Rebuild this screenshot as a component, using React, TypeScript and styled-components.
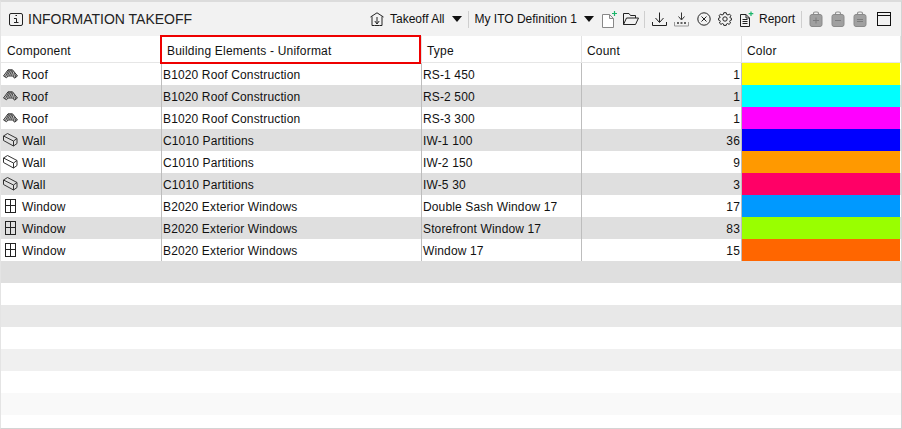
import styled, { createGlobalStyle } from 'styled-components';

const GlobalStyle = createGlobalStyle`
  html, body {
    margin: 0;
    padding: 0;
    background: #fff;
  }
  body {
    font-family: "Liberation Sans", Arial, sans-serif;
    font-size: 12px;
    color: #111;
  }
`;

const Panel = styled.div`
  width: 902px;
  height: 429px;
  box-sizing: border-box;
  border: 1px solid #d4d4d4;
  border-top: 2px solid #dcdcdc;
  border-left-color: #e4e4e4;
  overflow: hidden;
  display: flex;
  flex-direction: column;
`;

const TitleBar = styled.div`
  height: 34px;
  flex: none;
  background: #f2f2f2;
  display: flex;
  align-items: center;
  padding-left: 8px;
  padding-right: 10px;
`;

const Title = styled.div`
  font-size: 14px;
  margin-left: 5px;
  color: #222;
`;

const Toolbar = styled.div`
  margin-left: auto;
  display: flex;
  align-items: center;
  height: 100%;
`;

const ToolText = styled.span<{ $ml?: number }>`
  font-size: 12px;
  color: #111;
  margin-left: ${({ $ml }) => $ml ?? 0}px;
  white-space: nowrap;
`;

const Caret = styled.span<{ $ml?: number }>`
  width: 0;
  height: 0;
  border-left: 5.5px solid transparent;
  border-right: 5.5px solid transparent;
  border-top: 6px solid #111;
  margin-left: ${({ $ml }) => $ml ?? 0}px;
`;

const Sep = styled.span<{ $ml: number; $mr: number }>`
  width: 1px;
  height: 17px;
  background: #cfcfcf;
  margin-left: ${({ $ml }) => $ml}px;
  margin-right: ${({ $mr }) => $mr}px;
`;

const Ico = styled.svg<{ $ml?: number }>`
  flex: none;
  display: block;
  margin-left: ${({ $ml }) => $ml ?? 0}px;
`;

const columns = '161px 260px 160px 160px 159px';

const HeaderRow = styled.div`
  display: grid;
  grid-template-columns: ${columns};
  height: 27px;
  flex: none;
  border-bottom: 1px solid #e6e6e6;
  box-sizing: border-box;
`;

const HeaderCell = styled.div<{ $first?: boolean }>`
  position: relative;
  display: flex;
  align-items: center;
  box-sizing: border-box;
  padding-top: 3px;
  padding-left: ${({ $first }) => ($first ? '6px' : '5px')};
  border-right: 1px solid #e2e2e2;
  color: #111;
  letter-spacing: 0.2px;
`;

const ActiveMark = styled.div`
  position: absolute;
  top: -1px;
  left: -2px;
  right: 0;
  bottom: -2px;
  border: 2px solid #ee0000;
`;

const Row = styled.div<{ $bg: string }>`
  display: grid;
  grid-template-columns: ${columns};
  height: 22px;
  flex: none;
  background: ${({ $bg }) => $bg};
`;

const Cell = styled.div<{ $right?: boolean }>`
  display: flex;
  align-items: center;
  box-sizing: border-box;
  padding-top: 2px;
  padding-left: 1px;
  border-right: 1px solid #bdbdbd;
  white-space: nowrap;
  letter-spacing: 0.14px;
  ${({ $right }) => $right && 'justify-content: flex-end; padding-right: 1px;'}
`;

const NameCell = styled(Cell)`
  padding-top: 0;
  padding-left: 2px;
  gap: 4px;
`;

const NameText = styled.span`
  padding-top: 2px;
`;

const IconSlot = styled.span`
  width: 15px;
  height: 16px;
  display: flex;
  align-items: center;
  justify-content: center;
  flex: none;
`;

const ColorCell = styled.div<{ $color: string }>`
  background: ${({ $color }) => $color};
  margin-right: 1px;
`;

const EmptyRow = styled.div<{ $bg: string }>`
  height: 22px;
  flex: none;
  background: ${({ $bg }) => $bg};
`;

const RoofIcon = () => (
  <svg width="15" height="10" viewBox="0 0 15 10" fill="none" stroke="#3a3a3a" strokeWidth="1">
    <path d="M0.5 7 L5 0.8 H9.5 L14.5 7 L11.5 9.2 L9.8 7 H5 L3.5 8.8 Z" fill="#c4c4c4" />
    <path d="M2.5 7.5 L6 1 M4.5 6.5 L7.5 1 M6.5 6.5 L9 1 M8.5 6.5 L10 2 M10.5 7.5 L11.5 3.5 M12 8.5 L13 5.5" strokeWidth="0.9" />
  </svg>
);

const WallIcon = () => (
  <svg width="15" height="14" viewBox="0 0 15 14" fill="none" stroke="#333" strokeWidth="1">
    <path d="M0.5 3 L4.5 0.5 L14 5.5 V10.5 L10.5 13 L0.5 7.5 Z" />
    <path d="M0.5 3 L10.5 8 V13 M10.5 8 L14 5.5" />
  </svg>
);

const WindowIcon = () => (
  <svg width="11" height="14" viewBox="0 0 11 14" fill="none" stroke="#222" strokeWidth="1">
    <rect x="0.5" y="0.5" width="10" height="13" />
    <path d="M5.5 0.5 V13.5 M0.5 6.5 H10.5" />
  </svg>
);

const icons = { Roof: RoofIcon, Wall: WallIcon, Window: WindowIcon };

type Item = {
  component: keyof typeof icons;
  element: string;
  type: string;
  count: number;
  color: string;
};

const items: Item[] = [
  { component: 'Roof', element: 'B1020 Roof Construction', type: 'RS-1 450', count: 1, color: '#ffff00' },
  { component: 'Roof', element: 'B1020 Roof Construction', type: 'RS-2 500', count: 1, color: '#00ffff' },
  { component: 'Roof', element: 'B1020 Roof Construction', type: 'RS-3 300', count: 1, color: '#ff00ff' },
  { component: 'Wall', element: 'C1010 Partitions', type: 'IW-1 100', count: 36, color: '#0000ff' },
  { component: 'Wall', element: 'C1010 Partitions', type: 'IW-2 150', count: 9, color: '#ff9900' },
  { component: 'Wall', element: 'C1010 Partitions', type: 'IW-5 30', count: 3, color: '#ff0066' },
  { component: 'Window', element: 'B2020 Exterior Windows', type: 'Double Sash Window 17', count: 17, color: '#0099ff' },
  { component: 'Window', element: 'B2020 Exterior Windows', type: 'Storefront Window 17', count: 83, color: '#99ff00' },
  { component: 'Window', element: 'B2020 Exterior Windows', type: 'Window 17', count: 15, color: '#ff6600' },
];

const emptyRows = ['#dfdfdf', '#ffffff', '#e8e8e8', '#ffffff', '#f0f0f0', '#ffffff', '#f9f9f9', '#ffffff'];

const Bag = ({ mark, ml }: { mark: string; ml: number }) => (
  <Ico $ml={ml} width="14" height="16" viewBox="0 0 14 16">
    <path d="M4.5 4 V2.5 Q4.5 1 6 1 H8 Q9.5 1 9.5 2.5 V4" fill="none" stroke="#909090" strokeWidth="1.2" />
    <rect x="1" y="3.5" width="12" height="12" rx="2" fill="#a0a0a0" stroke="#8a8a8a" />
    <path d={mark} stroke="#7c7c7c" strokeWidth="1" fill="none" />
  </Ico>
);

const App = () => (
  <>
    <GlobalStyle />
    <Panel>
      <TitleBar>
        <Ico width="14" height="13" viewBox="0 0 14 13" fill="none" stroke="#222">
          <rect x="0.5" y="0.5" width="13" height="12" rx="1.5" />
          <path d="M5 5.5 H7.5 V9.5 M5 9.5 H9.5 M6.5 2.5 H8" />
        </Ico>
        <Title>INFORMATION TAKEOFF</Title>
        <Toolbar>
          <Ico width="14" height="14" viewBox="0 0 14 14" fill="none" stroke="#222">
            <path d="M0.5 5 L7 0.8 L13.5 5 M2 4.5 V13.5 H4.5 M12 4.5 V13.5 H9.5 M7 5 V11.5 M4.8 9 L7 12 L9.2 9 M4.5 13.5 H9.5" />
          </Ico>
          <ToolText $ml={6}>Takeoff All</ToolText>
          <Caret $ml={8} />
          <Sep $ml={6} $mr={5} />
          <ToolText>My ITO Definition 1</ToolText>
          <Caret $ml={7} />
          <Ico $ml={8} width="16" height="17" viewBox="0 0 16 17" fill="none">
            <path d="M0.5 3.5 H7.5 L11.5 7.5 V16.5 H0.5 Z M7.5 3.5 V7.5 H11.5" stroke="#888" fill="#fff" />
            <path d="M12.5 0 V5 M10 2.5 H15" stroke="#19b56a" strokeWidth="1.2" />
          </Ico>
          <Ico $ml={5} width="16" height="14" viewBox="0 0 16 14" fill="none" stroke="#222">
            <path d="M0.5 12.5 V1.5 H6 L7.5 3.5 H12.5 V6 M0.5 12.5 L3.5 6 H15.5 L12.5 12.5 Z" />
          </Ico>
          <Sep $ml={5} $mr={7} />
          <Ico width="15" height="15" viewBox="0 0 15 15" fill="none" stroke="#222">
            <path d="M7.5 0.5 V10 M3.5 6 L7.5 10.5 L11.5 6 M0.5 10 V13.5 H14.5 V10" />
          </Ico>
          <Ico $ml={7} width="15" height="15" viewBox="0 0 15 15" fill="none" stroke="#333">
            <path d="M7.5 0.5 V7.5 M4.5 4.5 L7.5 8 L10.5 4.5" />
            <path d="M0.5 10 V14 H14.5 V10" stroke="#999" />
            <path d="M3 11 H12" strokeDasharray="2 1.5" strokeWidth="1.5" />
          </Ico>
          <Ico $ml={8} width="14" height="14" viewBox="0 0 14 14" fill="none" stroke="#222">
            <circle cx="7" cy="7" r="6.2" />
            <path d="M4.5 4.5 L9.5 9.5 M9.5 4.5 L4.5 9.5" />
          </Ico>
          <Ico $ml={7} width="14" height="14" viewBox="0 0 14 14" fill="none" stroke="#222">
            <circle cx="7" cy="7" r="2.2" />
            <path d="M5.8 0.7 H8.2 L8.6 2.4 L10 3 L11.5 2.1 L12.9 3.7 L11.9 5.1 L12.3 6 L13.6 6.3 V8 L12.2 8.4 L11.7 9.5 L12.6 11 L11 12.4 L9.6 11.5 L8.5 12 L8.2 13.4 H5.8 L5.5 12 L4.4 11.5 L3 12.4 L1.4 11 L2.3 9.5 L1.8 8.4 L0.4 8 V6.3 L1.7 6 L2.1 5.1 L1.1 3.7 L2.5 2.1 L4 3 L5.4 2.4 Z" />
          </Ico>
          <Ico $ml={8} width="14" height="16" viewBox="0 0 14 16" fill="none">
            <path d="M0.5 3.5 H6 L9.5 7 V15.5 H0.5 Z M6 3.5 V7 H9.5 M2.5 8.5 H7.5 M2.5 10.5 H7.5 M2.5 12.5 H7.5" stroke="#222" />
            <path d="M11 0.5 V5 M8.7 2.7 H13.3" stroke="#19b56a" strokeWidth="1.2" />
          </Ico>
          <ToolText $ml={5}>Report</ToolText>
          <Sep $ml={6} $mr={7} />
          <Bag ml={0} mark="M7 6.5 V12.5 M4 9.5 H10" />
          <Bag ml={8} mark="M4 9.5 H10" />
          <Bag ml={8} mark="M4 8.5 H10 M4 10.5 H10" />
          <Ico $ml={10} width="14" height="14" viewBox="0 0 14 14" fill="none" stroke="#111">
            <rect x="0.5" y="0.5" width="13" height="13" />
            <path d="M0.5 3.5 H13.5" />
          </Ico>
        </Toolbar>
      </TitleBar>
      <HeaderRow>
        <HeaderCell $first>Component</HeaderCell>
        <HeaderCell>
          Building Elements - Uniformat
          <ActiveMark />
        </HeaderCell>
        <HeaderCell>Type</HeaderCell>
        <HeaderCell>Count</HeaderCell>
        <HeaderCell>Color</HeaderCell>
      </HeaderRow>
      {items.map((item, i) => {
        const Icon = icons[item.component];
        return (
          <Row key={item.type} $bg={i % 2 ? '#dfdfdf' : '#ffffff'}>
            <NameCell>
              <IconSlot>
                <Icon />
              </IconSlot>
              <NameText>{item.component}</NameText>
            </NameCell>
            <Cell>{item.element}</Cell>
            <Cell>{item.type}</Cell>
            <Cell $right>{item.count}</Cell>
            <ColorCell $color={item.color} />
          </Row>
        );
      })}
      {emptyRows.map((bg, i) => (
        <EmptyRow key={i} $bg={bg} />
      ))}
    </Panel>
  </>
);

export default App;
